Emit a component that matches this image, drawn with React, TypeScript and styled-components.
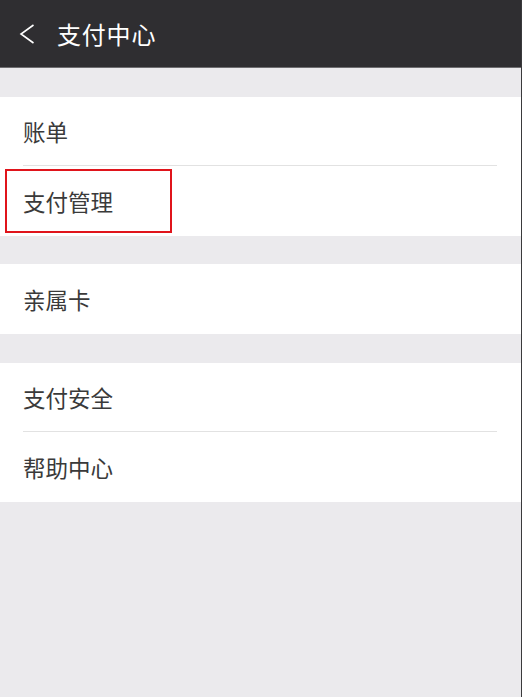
import React from 'react'
import styled, { createGlobalStyle } from 'styled-components'

const Global = createGlobalStyle`
  html, body {
    margin: 0;
    padding: 0;
    background: #ebeaed;
  }
  * {
    box-sizing: border-box;
  }
`

const Page = styled.div`
  width: 522px;
  height: 697px;
  background: #ebeaed;
  border-right: 1px solid #3a3a3c;
  font-family: 'Noto Sans CJK SC', 'Noto Sans', sans-serif;
  overflow: hidden;
`

const Header = styled.header`
  height: 68px;
  background: #2f2e31;
  border-bottom: 1px solid #6e6d70;
  display: flex;
  align-items: center;
  padding-left: 19px;
`

const Back = styled.svg`
  width: 16px;
  height: 20px;
  margin-right: 22px;
`

const Title = styled.h1`
  margin: 0;
  color: #ffffff;
  font-size: 24px;
  font-weight: 400;
  letter-spacing: 0.8px;
  line-height: 1;
`

const Group = styled.section`
  background: #ffffff;
  margin-top: 28.7px;
`

const Row = styled.div<{ $divider?: boolean }>`
  position: relative;
  height: 69.5px;
  display: flex;
  align-items: center;
  padding-left: 23px;
  color: #3a3a3a;
  font-size: 22.5px;
  line-height: 1;

  &::after {
    content: '';
    display: ${p => (p.$divider ? 'block' : 'none')};
    position: absolute;
    left: 23px;
    right: 24px;
    bottom: 0;
    height: 1px;
    background: #e2e2e2;
  }
`

const Highlight = styled.div`
  position: absolute;
  left: 5px;
  top: 3px;
  width: 167px;
  height: 64px;
  border: 2.5px solid #e0141b;
  pointer-events: none;
`

type Item = { label: string; highlight?: boolean }

const groups: Item[][] = [
  [{ label: '账单' }, { label: '支付管理', highlight: true }],
  [{ label: '亲属卡' }],
  [{ label: '支付安全' }, { label: '帮助中心' }]
]

export default function App() {
  return (
    <Page>
      <Global />
      <Header>
        <Back viewBox="0 0 16 20">
          <path d="M14.5 1 L2 10 L14.5 19" fill="none" stroke="#ffffff" strokeWidth="1.6" />
        </Back>
        <Title>支付中心</Title>
      </Header>
      {groups.map((items, gi) => (
        <Group key={gi}>
          {items.map((item, i) => (
            <Row key={item.label} $divider={i < items.length - 1}>
              {item.label}
              {item.highlight && <Highlight />}
            </Row>
          ))}
        </Group>
      ))}
    </Page>
  )
}
